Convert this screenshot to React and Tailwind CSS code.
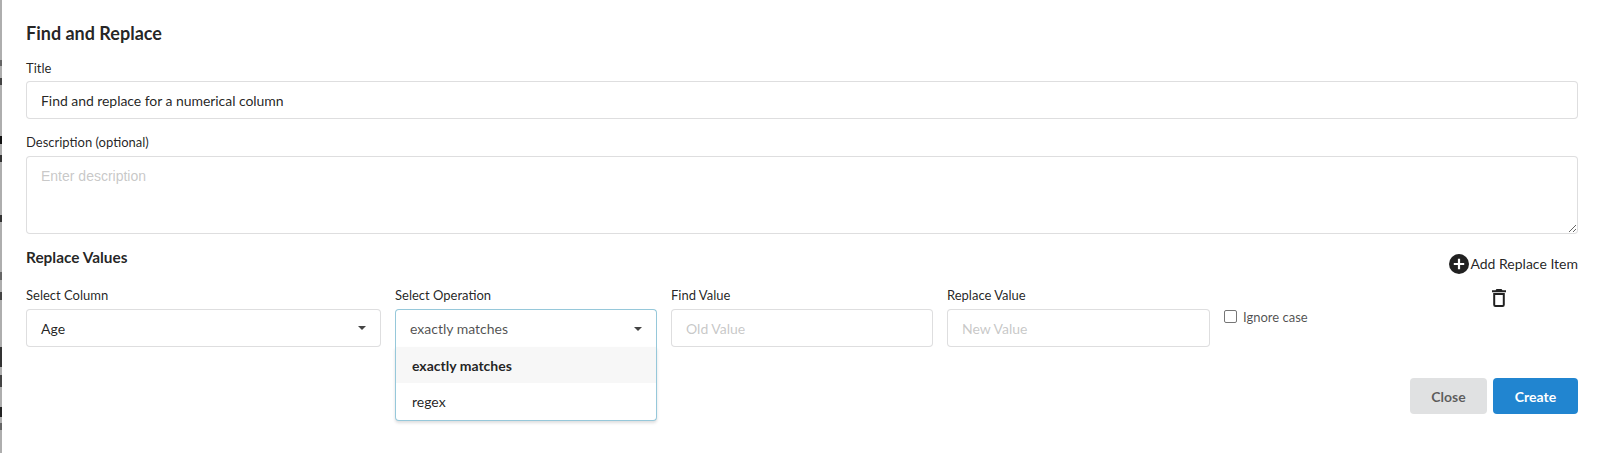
import { useState } from "react";

// bits of the page behind the modal that show through the overlay edge
const behindMarks = [
  "top-[60px] h-[6px] bg-[#666]",
  "top-[78px] h-[7px] bg-[#444]",
  "top-[136px] h-[8px] bg-[#111]",
  "top-[155px] h-[7px] bg-[#333]",
  "top-[215px] h-[7px] bg-[#333]",
  "top-[272px] h-[8px] bg-[#666]",
  "top-[292px] h-[8px] bg-[#444]",
  "top-[347px] h-[20px] bg-[#333]",
  "top-[375px] h-[12px] bg-[#444]",
  "top-[407px] h-[10px] bg-[#222]",
  "top-[423px] h-[7px] bg-[#666]",
];

const Caret = () => (
  <span className="h-0 w-0 border-x-[4px] border-t-[4px] border-x-transparent border-t-[#444]" />
);

const Field = ({ label, className = "", children }) => (
  <div className={className}>
    <label className="mb-[5px] block text-[13px] leading-[18px] text-[rgba(0,0,0,0.87)]">{label}</label>
    {children}
  </div>
);

const inputClass =
  "h-[38px] w-full rounded-[4px] border border-[rgba(34,36,38,0.15)] bg-white px-[14px] text-[14px] text-[rgba(0,0,0,0.87)] outline-none placeholder:text-[rgba(191,191,191,0.87)]";

const App = () => {
  const [title, setTitle] = useState("Find and replace for a numerical column");

  return (
    <div className="flex h-[453px] w-full overflow-hidden bg-white font-['Lato','Liberation_Sans',sans-serif]">
      <div className="relative w-[2px] shrink-0 bg-[#aeaeae]">
        {behindMarks.map((mark) => (
          <span key={mark} className={`absolute left-0 w-[2px] ${mark}`} />
        ))}
      </div>
      <div className="min-w-0 flex-1 pl-6 pr-6 pt-[22px]">
        <h2 className="text-[18px] font-bold leading-[22px] text-[rgba(0,0,0,0.87)]">Find and Replace</h2>

        <Field label="Title" className="mt-[15px]">
          <input
            className={`${inputClass} -mt-[1px] tracking-[-0.05px]`}
            value={title}
            onChange={(e) => setTitle(e.target.value)}
          />
        </Field>

        <Field label="Description (optional)" className="mt-[14px]">
          <textarea
            placeholder="Enter description"
            className="block h-[78px] w-full resize-y rounded-[4px] border border-[rgba(34,36,38,0.15)] bg-white px-[14px] py-[10px] font-['Liberation_Sans',sans-serif] text-[14px] leading-[18px] outline-none placeholder:text-[rgba(191,191,191,0.87)]"
          />
        </Field>

        <div className="mt-[13px] flex items-start justify-between">
          <h3 className="text-[15.4px] font-bold leading-[20px] text-[rgba(0,0,0,0.87)]">Replace Values</h3>
          <button type="button" className="mt-[7px] flex items-center text-[14px] leading-[20px] text-[rgba(0,0,0,0.87)]">
            <svg width="20" height="20" viewBox="0 0 20 20" className="mr-[1px]">
              <circle cx="10" cy="10" r="10" fill="#212121" />
              <path d="M10 4.8v10.4M4.8 10h10.4" stroke="#fff" strokeWidth="2.2" />
            </svg>
            Add Replace Item
          </button>
        </div>

        <div className="mt-[12px] flex items-start">
          <Field label="Select Column" className="w-[355px]">
            <div className={`${inputClass} flex items-center justify-between pr-[14px]`}>
              Age
              <Caret />
            </div>
          </Field>

          <Field label="Select Operation" className="relative ml-[14px] w-[262px]">
            <div className="flex h-[38px] items-center justify-between rounded-t-[4px] border border-b-0 border-[#96c8da] bg-white pl-[14px] pr-[14px] text-[14px] text-[rgba(0,0,0,0.7)]">
              exactly matches
              <Caret />
            </div>
            <div className="absolute inset-x-0 top-[61px] z-10 overflow-hidden rounded-b-[4px] border border-t-0 border-[#96c8da] bg-white text-[14px] text-[rgba(0,0,0,0.87)] shadow-[0_2px_3px_0_rgba(34,36,38,0.15)]">
              <div className="flex h-[36px] items-center bg-[rgba(0,0,0,0.03)] px-[16px] font-bold">exactly matches</div>
              <div className="flex h-[37px] items-center px-[16px]">regex</div>
            </div>
          </Field>

          <Field label="Find Value" className="ml-[14px] w-[262px]">
            <input className={inputClass} placeholder="Old Value" />
          </Field>

          <Field label="Replace Value" className="ml-[14px] w-[263px]">
            <input className={inputClass} placeholder="New Value" />
          </Field>

          <label className="ml-[14px] mt-[22px] flex items-start text-[13px] leading-[18px] text-[rgba(0,0,0,0.7)]">
            <span className="mt-[2px] h-[13px] w-[13px] rounded-[2px] border border-[#767676] bg-white" />
            <span className="ml-[6px]">Ignore case</span>
          </label>

          <button type="button" className="ml-auto mr-[72px] mt-[3px] shrink-0">
            <svg width="14" height="18" viewBox="0 0 14 18" className="block">
              <path d="M4.5 0h5l1 1.3H14v1.9H0V1.3h3.5z" fill="#212121" />
              <path d="M2.2 5h9.6v10.8a1.2 1.2 0 0 1-1.2 1.2H3.4a1.2 1.2 0 0 1-1.2-1.2z" fill="none" stroke="#212121" strokeWidth="2" />
            </svg>
          </button>
        </div>

        <div className="mt-[31px] flex justify-end gap-[6px]">
          <button type="button" className="h-[36px] w-[77px] rounded-[4px] bg-[#e0e1e2] text-[14px] font-bold text-[rgba(0,0,0,0.6)]">
            Close
          </button>
          <button type="button" className="h-[36px] w-[85px] rounded-[4px] bg-[#2185d0] text-[14px] font-bold text-white">
            Create
          </button>
        </div>
      </div>
    </div>
  );
};

export default App;
